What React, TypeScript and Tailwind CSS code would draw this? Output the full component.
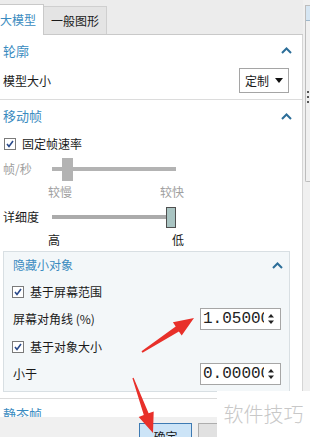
import React from "react"

function Chevron() {
    return (
        <svg width="11" height="7" viewBox="0 0 11 7">
            <path d="M1 6 L5.5 1.5 L10 6" fill="none" stroke="#2c6e99" strokeWidth="2" />
        </svg>
    )
}

function Check() {
    return (
        <span className="w-[12px] h-[12px] border border-[#7a7a7a] bg-white flex items-center justify-center shrink-0">
            <svg width="10" height="10" viewBox="0 0 10 10">
                <path d="M2 5 L4 7.5 L8 2" fill="none" stroke="#2a4a8a" strokeWidth="1.6" />
            </svg>
        </span>
    )
}

function NumberBox({ value }: { value: string }) {
    return (
        <div className="w-[81px] h-[22px] border border-[#a6a6a6] bg-white flex items-center">
            <div className="w-[63px] pl-[2px] overflow-hidden whitespace-nowrap font-['Liberation_Mono',monospace] text-[16px] leading-none text-[#222]">
                {value}
            </div>
            <svg width="8" height="14" viewBox="0 0 8 14" className="ml-[3px]">
                <path d="M1 5.5 L4 2 L7 5.5 Z" fill="#222" />
                <path d="M1 8.5 L7 8.5 L4 12 Z" fill="#222" />
            </svg>
        </div>
    )
}

export default function App() {
    return (
        <div className="relative w-[310px] h-[437px] overflow-hidden bg-[#f0f0f0] flex flex-col font-['Noto_Sans_CJK_SC',sans-serif] text-[12px] text-[#1a1a1a]">
            <div className="h-[417px] flex">
                {/* LEFT: tabs + property panel */}
                <div className="w-[303px] flex flex-col">
                    <div className="h-[35px] flex items-end border-b border-[#c9c9c9] bg-[#ececec] shrink-0">
                        <div className="w-[44px] h-[31px] bg-white border-r border-t border-[#c9c9c9] -mb-px flex items-center text-[#3a8bc0]">
                            大模型
                        </div>
                        <div className="w-[63px] h-[28px] bg-[#e4e4e4] border-t border-r border-[#cfcfcf] flex items-center justify-center">
                            一般图形
                        </div>
                    </div>
                    <div className="flex-1 min-h-0 bg-white border-r border-[#d5d5d5] overflow-hidden">
                        {/* 轮廓 */}
                        <div className="pb-[4px] border-b border-[#dcdcdc]">
                            <div className="h-[31px] flex items-center justify-between pl-[3px] pr-[10px]">
                                <span className="text-[13px] text-[#3a8bc0]">轮廓</span>
                                <Chevron />
                            </div>
                            <div className="h-[29px] flex items-center justify-between pl-[3px] pr-[13px]">
                                <span>模型大小</span>
                                <div className="w-[50px] h-[25px] border border-[#a5a5a5] bg-white flex items-center justify-between pl-[5px] pr-[5px]">
                                    <span>定制</span>
                                    <svg width="8" height="5" viewBox="0 0 8 5">
                                        <path d="M0 0 L8 0 L4 5 Z" fill="#111" />
                                    </svg>
                                </div>
                            </div>
                        </div>
                        {/* 移动帧 */}
                        <div className="h-[32px] flex items-center justify-between pl-[3px] pr-[10px]">
                            <span className="text-[13px] text-[#3a8bc0]">移动帧</span>
                            <Chevron />
                        </div>
                        <div className="h-[24px] flex items-center gap-[6px] pl-[4px]">
                            <Check />
                            <span>固定帧速率</span>
                        </div>
                        <div className="h-[26px] flex items-center pl-[3px]">
                            <span className="w-[49px] text-[#a0a0a0]">帧/秒</span>
                            <div className="relative w-[124px] h-[4px] bg-[#b3b3b3]">
                                <div className="absolute left-[10px] top-[-9px] w-[11px] h-[23px] bg-[#b3b3b3]" />
                            </div>
                        </div>
                        <div className="h-[20px] flex items-center pl-[48px]">
                            <div className="w-[136px] flex justify-between text-[#a0a0a0]">
                                <span>较慢</span>
                                <span>较快</span>
                            </div>
                        </div>
                        <div className="h-[30px] flex items-center pl-[3px]">
                            <span className="w-[49px]">详细度</span>
                            <div className="w-[114px] h-[4px] bg-[#ababab]" />
                            <div className="w-[10px] h-[21px] bg-[#a9c4c2] border border-[#4f4f4f]" />
                        </div>
                        <div className="h-[16px] flex items-center pl-[48px]">
                            <div className="w-[136px] flex justify-between">
                                <span>高</span>
                                <span>低</span>
                            </div>
                        </div>
                        {/* 隐藏小对象 */}
                        <div className="mt-[3px] ml-[3px] w-[287px] bg-[#f3f7f9] border border-[#d8dfe3] pb-[5px]">
                            <div className="h-[26px] flex items-center justify-between pl-[9px] pr-[6px]">
                                <span className="text-[#3a8bc0]">隐藏小对象</span>
                                <Chevron />
                            </div>
                            <div className="h-[28px] flex items-center gap-[6px] pl-[8px]">
                                <Check />
                                <span>基于屏幕范围</span>
                            </div>
                            <div className="h-[26px] flex items-center justify-between pl-[9px] pr-[8px]">
                                <span>屏幕对角线 (%)</span>
                                <NumberBox value="1.050000" />
                            </div>
                            <div className="h-[30px] flex items-center gap-[6px] pl-[8px]">
                                <Check />
                                <span>基于对象大小</span>
                            </div>
                            <div className="h-[24px] flex items-center justify-between pl-[9px] pr-[8px]">
                                <span>小于</span>
                                <NumberBox value="0.000000" />
                            </div>
                        </div>
                        {/* 静态帧 */}
                        <div className="mt-[6px] border-t border-[#dcdcdc] h-[31px] flex items-center justify-between pl-[3px] pr-[10px]">
                            <span className="text-[13px] text-[#3a8bc0]">静态帧</span>
                            <Chevron />
                        </div>
                    </div>
                </div>
                {/* RIGHT: neighbouring pane edge */}
                <div className="flex-1 pt-[5px] pl-[2px]">
                    <div className="h-[177px] border-l border-t border-b border-[#bdbdbd] rounded-bl-[2px] bg-[#f0f0f0] flex flex-col">
                        <div className="h-[15px] bg-[#d6e6f3] border-b border-[#9fb8cc]" />
                        <div className="mt-[70px] ml-[1px] flex flex-col gap-[3px]">
                            <span className="w-[2px] h-[2px] bg-[#555]" />
                            <span className="w-[2px] h-[2px] bg-[#555]" />
                            <span className="w-[2px] h-[2px] bg-[#555]" />
                        </div>
                    </div>
                </div>
            </div>
            {/* BOTTOM BAR */}
            <div className="h-[20px] flex items-start pt-[6px] pl-[139px] gap-[6px] shrink-0">
                <div className="w-[53px] h-[22px] bg-[#cce4f7] border border-[#3d7ab3] flex justify-center pt-[7px] leading-none">
                    确定
                </div>
                <div className="w-[40px] h-[22px] bg-[#e1e1e1] border border-[#adadad]" />
            </div>
            {/* WATERMARK */}
            <div className="absolute left-[217px] top-[391px] w-[93px] h-[46px] bg-white flex items-center justify-center text-[20px] font-light text-[#c8c8c8]">
                软件技巧
            </div>
            {/* ANNOTATION ARROWS */}
            <svg className="absolute left-0 top-0 pointer-events-none" width="310" height="437" viewBox="0 0 310 437">
                <polygon
                    points="141.5,351.2 175.7,326.4 172.9,322.2 194,318 181.7,335.6 178.9,331.4 142.5,352.8"
                    fill="#e8302a"
                />
                <polygon
                    points="133.6,377.8 148.6,413.3 153.7,411.5 153,433 138.7,416.9 143.8,415.1 132.4,378.2"
                    fill="#e8302a"
                />
            </svg>
        </div>
    )
}
